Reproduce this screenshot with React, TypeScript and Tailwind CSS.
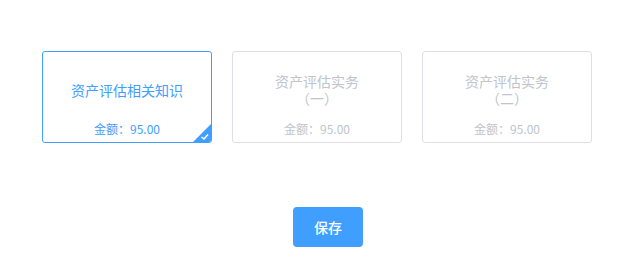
import React, { useState } from 'react';

type Course = { id: number; lines: string[]; price: string };

const courses: Course[] = [
  { id: 1, lines: ['资产评估相关知识'], price: '95.00' },
  { id: 2, lines: ['资产评估实务', '（一）'], price: '95.00' },
  { id: 3, lines: ['资产评估实务', '（二）'], price: '95.00' },
];

const font = { fontFamily: '"Noto Sans CJK SC", "Liberation Sans", sans-serif' };

export default function App() {
  const [selected, setSelected] = useState(1);

  return (
    <div className="h-[265px] w-[642px] bg-white" style={font}>
      {/* Course cards */}
      <div className="flex gap-[20px] pl-[42px] pt-[51px]">
        {courses.map((c) => {
          const active = c.id === selected;
          return (
            <div
              key={c.id}
              onClick={() => setSelected(c.id)}
              className={`relative flex h-[92px] w-[170px] cursor-pointer flex-col overflow-hidden rounded-[3px] border ${
                active ? 'border-[#409eff] text-[#409eff]' : 'border-[#dcdfe6] text-[#c0c4cc]'
              }`}
            >
              <div className="mt-[5px] flex h-[66px] flex-col items-center justify-center text-[14px] leading-[17px]">
                {c.lines.map((l) => (
                  <div key={l}>{l}</div>
                ))}
              </div>
              <div className="text-center text-[12px] leading-[12px]">金额：{c.price}</div>
              {active && (
                <svg className="absolute bottom-0 right-0" width="18" height="18" viewBox="0 0 18 18">
                  <path d="M18 0 L18 18 L0 18 Z" fill="#409eff" />
                  <path d="M8.5 13 L11 15 L15 10.5" stroke="#fff" strokeWidth="1.6" fill="none" />
                </svg>
              )}
            </div>
          );
        })}
      </div>

      {/* Save */}
      <div className="flex justify-center pl-[14px] pt-[64px]">
        <button className="h-[40px] w-[70px] rounded-[4px] bg-[#409eff] text-[14px] font-medium text-white">
          保存
        </button>
      </div>
    </div>
  );
}
